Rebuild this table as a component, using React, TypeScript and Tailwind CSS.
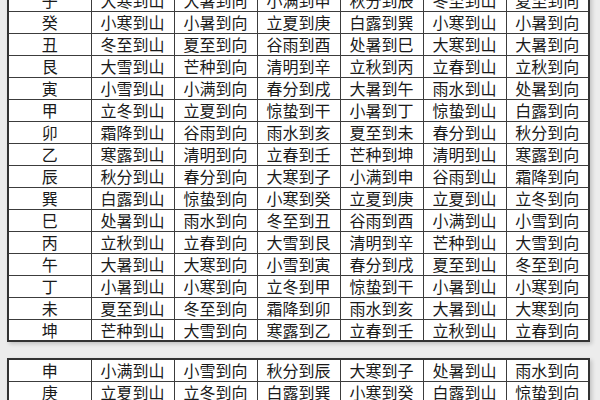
const main: string[][] = [
  ["子", "大寒到山", "大暑到向", "小满到申", "秋分到辰", "冬至到山", "夏至到向"],
  ["癸", "小寒到山", "小暑到向", "立夏到庚", "白露到巽", "小寒到山", "小暑到向"],
  ["丑", "冬至到山", "夏至到向", "谷雨到酉", "处暑到巳", "大寒到山", "大暑到向"],
  ["艮", "大雪到山", "芒种到向", "清明到辛", "立秋到丙", "立春到山", "立秋到向"],
  ["寅", "小雪到山", "小满到向", "春分到戌", "大暑到午", "雨水到山", "处暑到向"],
  ["甲", "立冬到山", "立夏到向", "惊蛰到干", "小暑到丁", "惊蛰到山", "白露到向"],
  ["卯", "霜降到山", "谷雨到向", "雨水到亥", "夏至到未", "春分到山", "秋分到向"],
  ["乙", "寒露到山", "清明到向", "立春到壬", "芒种到坤", "清明到山", "寒露到向"],
  ["辰", "秋分到山", "春分到向", "大寒到子", "小满到申", "谷雨到山", "霜降到向"],
  ["巽", "白露到山", "惊蛰到向", "小寒到癸", "立夏到庚", "立夏到山", "立冬到向"],
  ["巳", "处暑到山", "雨水到向", "冬至到丑", "谷雨到酉", "小满到山", "小雪到向"],
  ["丙", "立秋到山", "立春到向", "大雪到艮", "清明到辛", "芒种到山", "大雪到向"],
  ["午", "大暑到山", "大寒到向", "小雪到寅", "春分到戌", "夏至到山", "冬至到向"],
  ["丁", "小暑到山", "小寒到向", "立冬到甲", "惊蛰到干", "小暑到山", "小寒到向"],
  ["未", "夏至到山", "冬至到向", "霜降到卯", "雨水到亥", "大暑到山", "大寒到向"],
  ["坤", "芒种到山", "大雪到向", "寒露到乙", "立春到壬", "立秋到山", "立春到向"],
];

const second: string[][] = [
  ["申", "小满到山", "小雪到向", "秋分到辰", "大寒到子", "处暑到山", "雨水到向"],
  ["庚", "立夏到山", "立冬到向", "白露到巽", "小寒到癸", "白露到山", "惊蛰到向"],
];

function Table({ rows }: { rows: string[][] }) {
  return (
    <table className="w-[583px] table-fixed border-collapse border-2 border-[#333] bg-white shadow-[2px_2px_4px_rgba(0,0,0,0.18)]">
      <tbody>
        {rows.map((row) => (
          <tr key={row[0]} className="h-[22px]">
            {row.map((cell, i) => (
              <td
                key={i}
                className="border border-[#3c3c3c] p-0 text-center align-middle text-[16px] leading-[20px] text-[#1a1a1a]"
              >
                {cell}
              </td>
            ))}
          </tr>
        ))}
      </tbody>
    </table>
  );
}

export default function App() {
  return (
    <div
      className="h-[400px] w-[600px] overflow-hidden bg-[#ececec] pl-[7px]"
      style={{ fontFamily: '"Noto Sans CJK SC", "Noto Sans", sans-serif' }}
    >
      <div className="-mt-[12px] flex flex-col gap-[16px]">
        <Table rows={main} />
        <Table rows={second} />
      </div>
    </div>
  );
}
